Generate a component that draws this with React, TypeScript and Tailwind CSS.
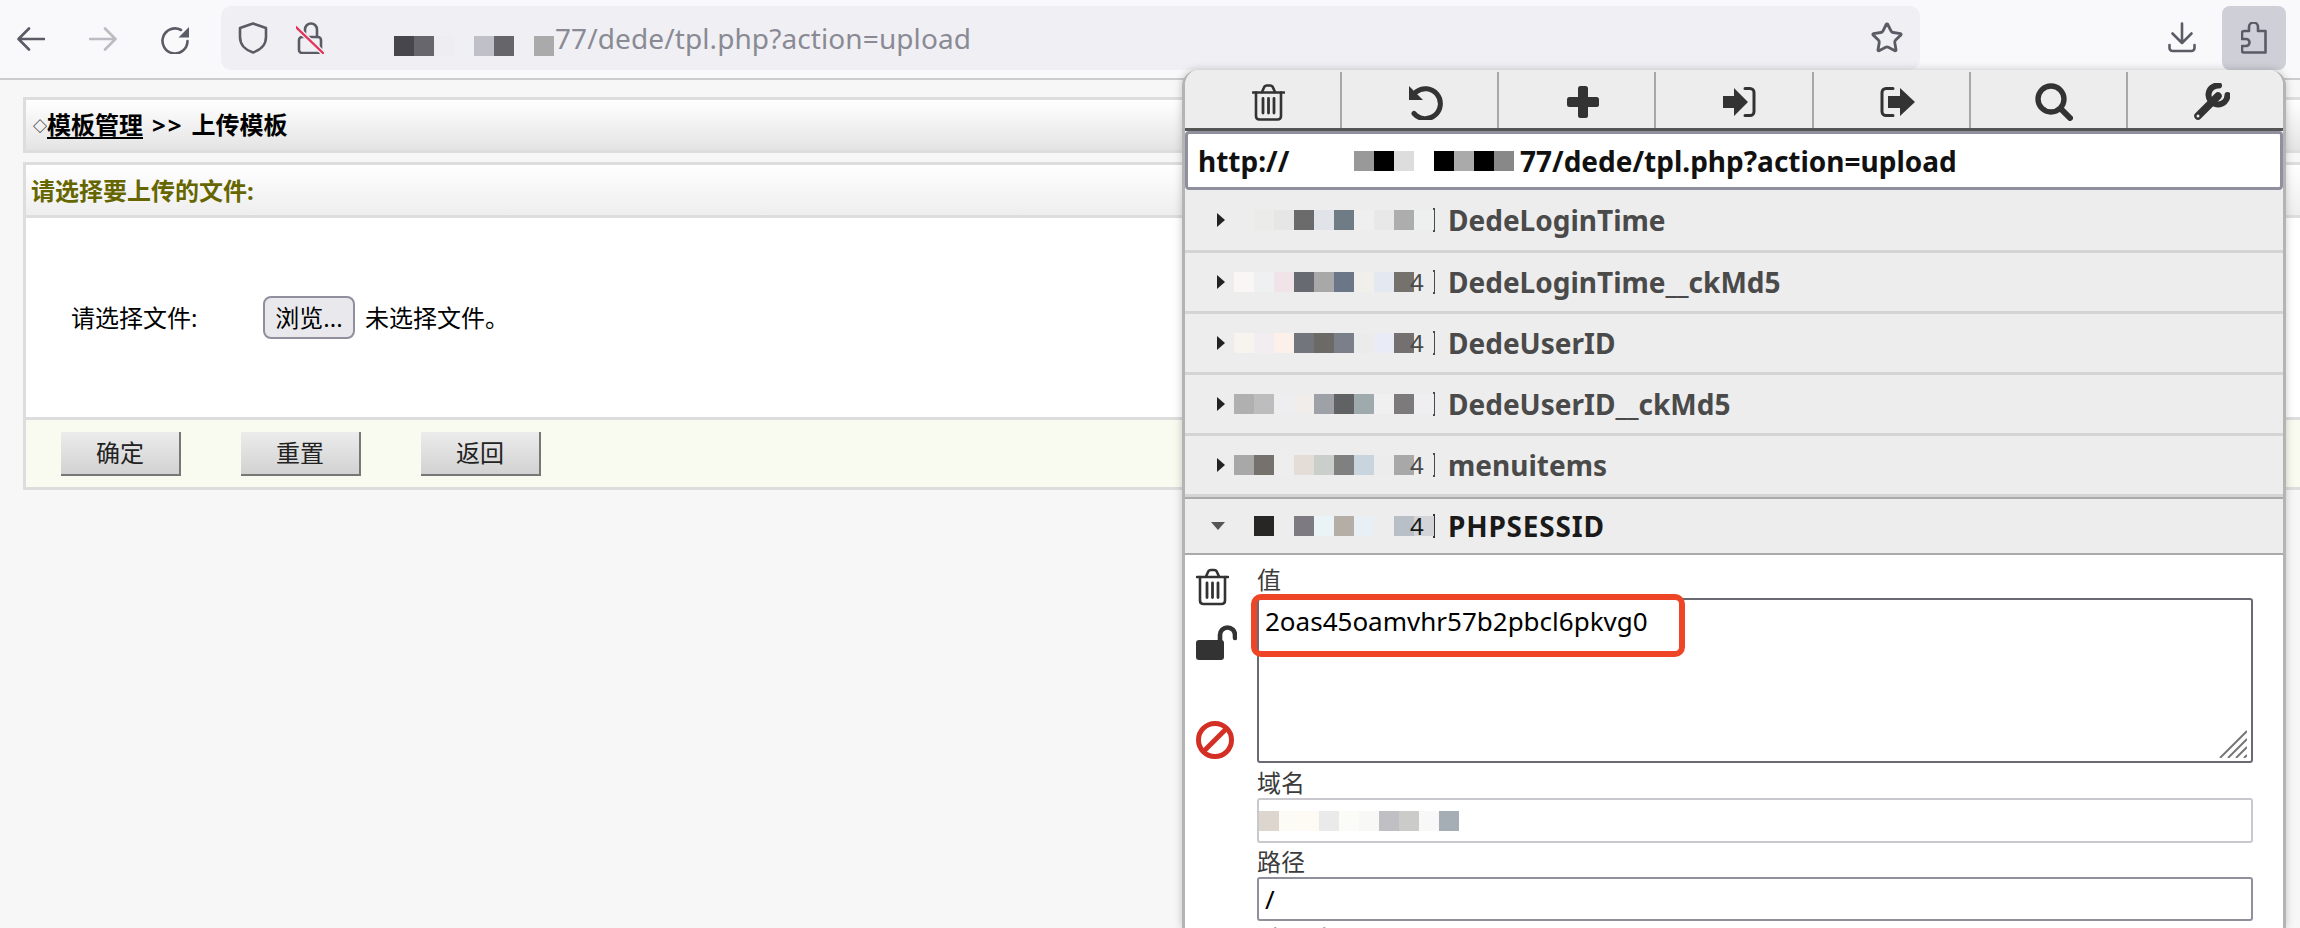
import React from 'react';
import { Star } from 'lucide-react';

// blurred-out address fragments from the screenshot, 20px blocks
const Mosaic: React.FC<{ cells: string[]; tail?: string }> = ({ cells, tail }) => (
  <div className="flex h-5 w-[200px] shrink-0 items-center relative">
    {cells.map((c, i) => (
      <div key={i} className="h-5 w-5 shrink-0" style={{ background: c }} />
    ))}
    {tail && <span className="absolute left-[176px] text-[24px] leading-5 font-normal">{tail}</span>}
  </div>
);

const cookies = [
  { name: 'DedeLoginTime', h: 'h-[63px]', cells: ['#ededed', '#ebebe9', '#e6e6e6', '#6b6b6b', '#e0e4e8', '#6f7b85', '#efefef', '#e8e8e8', '#adadad', '#eef0f0'] },
  { name: 'DedeLoginTime__ckMd5', h: 'h-[61px]', tail: '4', cells: ['#faf6f6', '#eff0f1', '#f1e4e8', '#676a70', '#a8a8a8', '#6b7788', '#f1efec', '#e4e9f1', '#75726e', '#ededed'] },
  { name: 'DedeUserID', h: 'h-[61px]', tail: '4', cells: ['#f7f3ef', '#f2edf0', '#fcf1ea', '#72757c', '#6b6a66', '#7b7f8a', '#ebebeb', '#e9ebf6', '#73706f', '#ededed'] },
  { name: 'DedeUserID__ckMd5', h: 'h-[61px]', cells: ['#b0b0b0', '#bdbdbd', '#eeeef1', '#f1edea', '#9fa1a8', '#616263', '#9faaad', '#f0f0f0', '#7d7a7c', '#efeff2'] },
  { name: 'menuitems', h: 'h-[61px]', tail: '4', cells: ['#a8a8a8', '#75726e', '#eeeeee', '#e3dcd7', '#cbcfcc', '#808080', '#c8d4de', '#ececec', '#a8a8a8', '#ededed'] },
];

const ToolbarIcon = ({ children }: { children: React.ReactNode }) => (
  <div className="flex flex-1 items-center justify-center border-r-2 border-[#a8a8a8] pl-[12px] pt-[4px] last:border-r-0">{children}</div>
);

const FieldLabel = ({ children }: { children: React.ReactNode }) => (
  <div className="h-[30px] text-[24px] leading-[30px] text-[#3c3c3c]">{children}</div>
);

const TrashIcon = ({ className }: { className: string }) => (
  <svg viewBox="0 0 33 37" className={className} fill="none" stroke="#333" strokeWidth="2.6" strokeLinecap="round">
    <path d="M1 8.5H32" />
    <path d="M10 8 L12 3.5 Q12.8 1.5 15 1.5 H18 Q20.2 1.5 21 3.5 L23 8" />
    <path d="M4 8.5 V32 Q4 35.5 7.5 35.5 H25.5 Q29 35.5 29 32 V8.5" />
    <path d="M11 14.5 V29 M16.5 14.5 V29 M22 14.5 V29" strokeWidth="2.8" />
  </svg>
);

export default function App() {
  return (
    <div className="relative h-[928px] w-[2300px] overflow-hidden bg-[#f7f7f7] font-['Noto_Sans','Noto_Sans_CJK_SC',sans-serif]">
      {/* browser toolbar */}
      <div className="flex h-[80px] items-start border-b-[2px] border-[#cccccc] bg-[#f9f9fb]">
        <svg viewBox="0 0 28 24" className="ml-[17px] mt-[27px] h-6 w-7" fill="none" stroke="#5b5b66" strokeWidth="2.6" strokeLinecap="round" strokeLinejoin="round">
          <path d="M27 12H2M12 1.5L1.5 12L12 22.5" />
        </svg>
        <svg viewBox="0 0 28 24" className="ml-[44px] mt-[27px] h-6 w-7" fill="none" stroke="#bcbcc2" strokeWidth="2.6" strokeLinecap="round" strokeLinejoin="round">
          <path d="M1 12H26M16 1.5L26.5 12L16 22.5" />
        </svg>
        <svg viewBox="0 0 28 28" className="ml-[44px] mt-[26px] h-7 w-7" fill="none" stroke="#5b5b66" strokeWidth="2.6" strokeLinecap="round">
          <path d="M26.5 15A12.5 12.5 0 1 1 20 4" />
          <path d="M28 1V11.5H17.5Z" fill="#5b5b66" stroke="none" />
        </svg>
        <div className="relative ml-[32px] mt-[6px] flex h-[64px] w-[1699px] items-center rounded-[10px] bg-[#f0f0f4]">
          <svg viewBox="0 0 30 32" className="ml-[17px] h-8 w-[30px]" fill="none" stroke="#5b5b66" strokeWidth="2.6" strokeLinejoin="round">
            <path d="M15 1.5L28 6V15C28 23.5 21.5 28.5 15 30.5C8.5 28.5 2 23.5 2 15V6Z" />
          </svg>
          <svg viewBox="0 0 28 32" className="ml-[28px] h-8 w-7" fill="none" stroke="#5b5b66" strokeWidth="2.6" strokeLinecap="round">
            <path d="M9 15V7.5a6 6 0 0 1 12 0V15" />
            <rect x="3" y="15" width="22" height="16" rx="3" />
            <path d="M0 5L27 31" stroke="#f0f0f4" strokeWidth="5" />
            <path d="M0 5L27 31" stroke="#e2355c" strokeWidth="2.4" />
          </svg>
          <div className="ml-[70px] mt-[30px] self-start">
            <Mosaic cells={['#46464c', '#66666c', '#eeeef0', '#f0f0f4', '#c0c0c8', '#66666a', '#f0f0f4', '#aaaaaa']} />
          </div>
          <span className="absolute left-[334px] text-[28px] leading-[64px] tracking-[0.1px] text-[#8a8a94]">77/dede/tpl.php?action=upload</span>
          <Star size={34} strokeWidth={2} color="#5b5b66" className="absolute left-[1649px] top-[15px]" />
        </div>
        <svg viewBox="0 0 28 31" className="ml-[248px] mt-[22px] h-[31px] w-7" fill="none" stroke="#5b5b66" strokeWidth="2.6" strokeLinecap="round" strokeLinejoin="round">
          <path d="M14 1.5V21M4.5 11.5L14 21L23.5 11.5" />
          <path d="M1.5 23V26a3 3 0 0 0 3 3H23.5a3 3 0 0 0 3-3V23" />
        </svg>
        <div className="ml-[26px] mt-[6px] flex h-[64px] w-[64px] items-center justify-center rounded-[8px] bg-[#cfcfd8]">
          <svg viewBox="0 0 26 32" className="h-8 w-[26px]" fill="none" stroke="#5b5b66" strokeWidth="2.6" strokeLinejoin="round">
            <path d="M8 9V5a4.5 4.5 0 0 1 9 0V9H24.5V30.5H3a2 2 0 0 1-2-2V24H5a3.5 3.5 0 0 0 0-7H1V11a2 2 0 0 1 2-2Z" />
          </svg>
        </div>
      </div>

      {/* dede admin page */}
      <div className="ml-[23px] pt-[17px] text-black">
        <div className="flex h-[56px] items-center border-[3px] border-r-0 border-[#dddddd] bg-gradient-to-b from-white to-[#e4e4e4] pl-[7px] text-[24px] font-bold">
          <span className="text-[14px] font-normal">◇</span>
          <a className="underline underline-offset-[3px]">模板管理</a>
          <span className="ml-[9px] tracking-[2px]">&gt;&gt;</span>
          <span className="ml-[8px]">上传模板</span>
        </div>
        <div className="mt-[9px] border-[3px] border-r-0 border-[#dddddd]">
          <div className="flex h-[53px] items-center border-b-[3px] border-[#dddddd] bg-gradient-to-b from-white to-[#eeeeee] pl-[5px] pt-[1px] text-[24px] font-bold text-[#666600]">
            请选择要上传的文件:
          </div>
          <div className="flex h-[199px] items-center bg-white pl-[45px] text-[24px]">
            <span className="w-[192px]">请选择文件:</span>
            <button className="h-[43px] w-[92px] rounded-[8px] border-[2px] border-[#8f8f9d] bg-[#e9e9ed] text-center text-[24px] leading-[36px]">浏览...</button>
            <span className="ml-[10px]">未选择文件。</span>
          </div>
          <div className="flex h-[70px] items-start gap-[60px] border-t-[3px] border-[#dddddd] bg-[#f9fbf0] pl-[35px] pt-[12px]">
            {['确定', '重置', '返回'].map(b => (
              <button key={b} className="h-[44px] w-[120px] border-b-[2px] border-r-[2px] border-[#777777] bg-gradient-to-b from-[#ececec] to-[#d2d2d2] text-center text-[24px] leading-[40px] text-[#222222]">
                {b}
              </button>
            ))}
          </div>
        </div>
      </div>

      {/* cookie manager popup */}
      <div className="absolute left-[1182px] top-[70px] h-[858px] w-[1104px] overflow-hidden rounded-t-[16px] border-x-[3px] border-[#b4b4b4] bg-white shadow-[0_0_8px_rgba(0,0,0,0.22)]">
        <div className="flex h-[61px] border-b-[3px] border-[#555555] bg-[#ededed] pt-[2px]">
          <ToolbarIcon><TrashIcon className="h-[37px] w-[33px]" /></ToolbarIcon>
          <ToolbarIcon>
            <svg viewBox="0 0 35 35" className="h-[35px] w-[35px]" fill="none" stroke="#333" strokeWidth="5" strokeLinecap="round">
              <path d="M6 28.5A15 15 0 1 0 8 7" />
              <path d="M1 1V15H15Z" fill="#333" stroke="none" />
            </svg>
          </ToolbarIcon>
          <ToolbarIcon>
            <svg viewBox="0 0 32 32" className="h-8 w-8" fill="#333">
              <rect x="11" y="0" width="10" height="32" rx="2.5" />
              <rect x="0" y="11" width="32" height="10" rx="2.5" />
            </svg>
          </ToolbarIcon>
          <ToolbarIcon>
            <svg viewBox="0 0 33 30" className="h-[30px] w-[33px]" fill="#333">
              <path d="M0 9H11V1L25 15L11 29V21H0Z" />
              <path d="M22 1.5H27a4 4 0 0 1 4 4V24.5a4 4 0 0 1-4 4H22" fill="none" stroke="#333" strokeWidth="3" strokeLinecap="round" />
            </svg>
          </ToolbarIcon>
          <ToolbarIcon>
            <svg viewBox="0 0 35 30" className="h-[30px] w-[35px]" fill="#333">
              <path d="M8 9H20V1L35 15L20 29V21H8Z" />
              <path d="M13 1.5H6a4 4 0 0 0-4 4V24.5a4 4 0 0 0 4 4H13" fill="none" stroke="#333" strokeWidth="3" strokeLinecap="round" />
            </svg>
          </ToolbarIcon>
          <ToolbarIcon>
            <svg viewBox="0 0 38 38" className="h-[38px] w-[38px]" fill="none" stroke="#333" strokeLinecap="round">
              <circle cx="16" cy="16" r="13" strokeWidth="5.4" />
              <path d="M26 26L35 35" strokeWidth="6" />
            </svg>
          </ToolbarIcon>
          <ToolbarIcon>
            <svg viewBox="0 0 37 38" className="h-[38px] w-[37px]" fill="none" stroke="#333" strokeLinecap="round">
              <path d="M5 33L20 18" strokeWidth="7.5" />
              <path d="M26 2.5A9.5 9.5 0 1 0 34.5 12" strokeWidth="6" />
              <path d="M20 18L25 13" strokeWidth="7.5" />
              <circle cx="5" cy="33" r="1.5" fill="#ededed" stroke="none" />
            </svg>
          </ToolbarIcon>
        </div>

        <div className="relative flex h-[59px] items-center rounded-[4px] border-[3px] border-[#8f8f9d] bg-white pl-[10px] text-[28px] font-bold text-[#111111]">
          <span className="w-[92px] shrink-0">http://</span>
          <div className="flex w-[264px] shrink-0 pl-[64px]">
            <Mosaic cells={['#999999', '#000000', '#dddddd', '#ffffff', '#000000', '#aaaaaa', '#000000', '#888888']} />
          </div>
          <span className="absolute left-[332px]">77/dede/tpl.php?action=upload</span>
        </div>

        {cookies.map(c => (
          <div key={c.name} className={`flex ${c.h} items-center border-b-[3px] border-[#d4d4d4] bg-[#ededed] pl-[32px] text-[28px] font-bold text-[#4a4a4a]`}>
            <svg viewBox="0 0 8 14" className="h-[14px] w-2 shrink-0"><path d="M0 0L8 7L0 14Z" fill="#222" /></svg>
            <div className="ml-[9px]"><Mosaic cells={c.cells} tail={c.tail} /></div>
            <span className="ml-[-1px] h-[24px] w-[2px] shrink-0 bg-[#4a4a4a]" />
            <span className="ml-[13px]">{c.name}</span>
          </div>
        ))}

        <div className="flex h-[58px] items-center border-y-[2px] border-[#aaaaaa] bg-[#ededed] pl-[26px] text-[28px] font-bold tracking-[0.8px] text-[#1a1a1a]">
          <svg viewBox="0 0 14 8" className="h-2 w-[14px] shrink-0"><path d="M0 0H14L7 8Z" fill="#555" /></svg>
          <div className="ml-[9px]"><Mosaic tail="4" cells={['#ededed', '#282624', '#ededed', '#7d7a82', '#eaf3f5', '#b4aea6', '#e8f0f5', '#ededed', '#b8bfc6', '#d2d4d8']} /></div>
          <span className="ml-[-1px] h-[24px] w-[2px] shrink-0 bg-[#333333]" />
          <span className="ml-[13px]">PHPSESSID</span>
        </div>

        <div className="flex">
          <div className="w-[72px] shrink-0 pl-[11px] pt-[13px]">
            <TrashIcon className="h-[38px] w-[33px]" />
            <svg viewBox="0 0 41 35" className="mt-[19px] h-[35px] w-[41px]" fill="none">
              <rect x="0" y="15" width="28" height="20" rx="3" fill="#333" />
              <path d="M24 16V10a7.5 7.5 0 0 1 15 0V13" stroke="#333" strokeWidth="4.6" strokeLinecap="round" />
            </svg>
            <svg viewBox="0 0 38 38" className="mt-[61px] h-[38px] w-[38px]" fill="none" stroke="#d32f24" strokeWidth="5">
              <circle cx="19" cy="19" r="16.5" />
              <path d="M8 30L30 8" />
            </svg>
          </div>
          <div className="w-[996px] shrink-0 pt-[10px]">
            <FieldLabel>值</FieldLabel>
            <div className="relative mt-[3px] h-[165px] rounded-[3px] border-[2px] border-[#6a6a74] pl-[6px] pt-[4px] text-[26px] leading-[34px] text-black">
              2oas45oamvhr57b2pbcl6pkvg0
              <svg viewBox="0 0 28 28" className="absolute bottom-[3px] right-[4px] h-7 w-7" stroke="#777" strokeWidth="2">
                <path d="M1 28L28 1M9 28L28 9M17 28L28 17M25 28L28 25" />
              </svg>
            </div>
            <div className="mt-[5px]"><FieldLabel>域名</FieldLabel></div>
            <div className="flex h-[45px] items-center rounded-[3px] border-[2px] border-[#c8c8ce]">
              <Mosaic cells={['#ddd6ce', '#fdfbf5', '#fdfbf3', '#eaeaea', '#fbfbf8', '#f8f8f6', '#c0c0c4', '#cbcbc9', '#f8f8f8', '#a6aeb5']} />
            </div>
            <div className="mt-[4px]"><FieldLabel>路径</FieldLabel></div>
            <div className="h-[44px] rounded-[3px] border-[2px] border-[#8f8f9d] pl-[6px] text-[26px] leading-[40px] text-black">/</div>
            <div className="mt-[3px]"><FieldLabel>过期时间</FieldLabel></div>
          </div>
        </div>

        {/* red annotation around the session value */}
        <div className="absolute left-[66px] top-[524px] h-[63px] w-[434px] rounded-[10px] border-[6px] border-[#ee4526]" />
      </div>
    </div>
  );
}
